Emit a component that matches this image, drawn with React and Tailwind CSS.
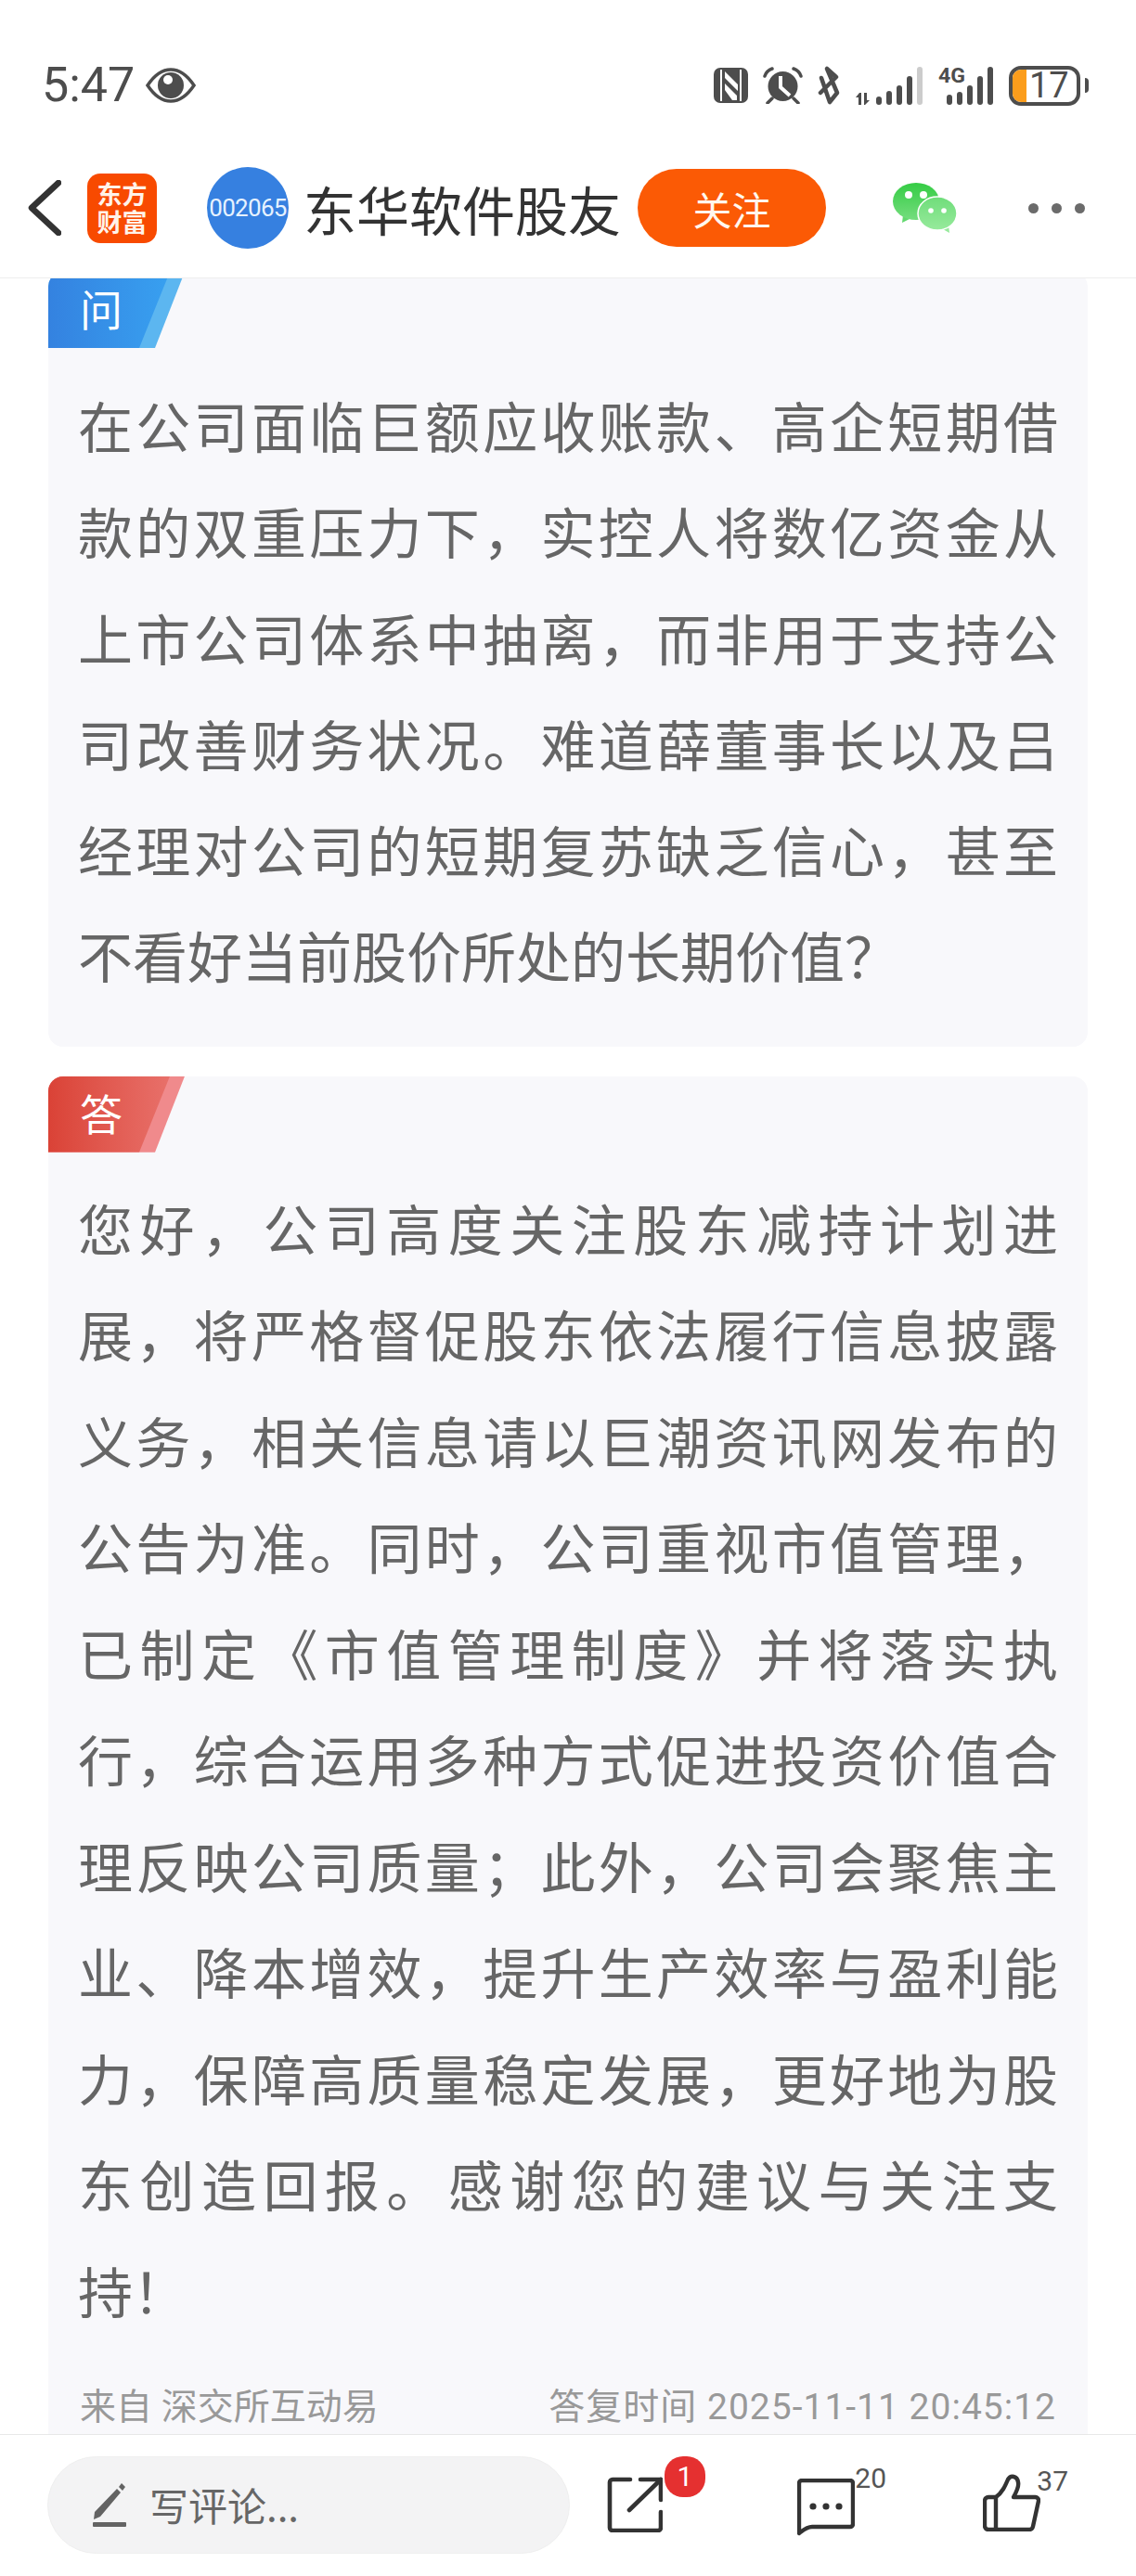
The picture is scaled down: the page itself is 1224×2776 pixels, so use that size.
import React from 'react'

const question =
  '在公司面临巨额应收账款、高企短期借款的双重压力下，实控人将数亿资金从上市公司体系中抽离，而非用于支持公司改善财务状况。难道薛董事长以及吕经理对公司的短期复苏缺乏信心，甚至不看好当前股价所处的长期价值？'

const answer =
  '您好，公司高度关注股东减持计划进展，将严格督促股东依法履行信息披露义务，相关信息请以巨潮资讯网发布的公告为准。同时，公司重视市值管理，已制定《市值管理制度》并将落实执行，综合运用多种方式促进投资价值合理反映公司质量；此外，公司会聚焦主业、降本增效，提升生产效率与盈利能力，保障高质量稳定发展，更好地为股东创造回报。感谢您的建议与关注支持！'

const EyeIcon = () => (
  <svg width="54" height="38" viewBox="0 0 54 38" fill="none">
    <path d="M2 19 C10 7 18 2 27 2 C36 2 44 7 52 19 C44 31 36 36 27 36 C18 36 10 31 2 19 Z" stroke="#4d4d4d" strokeWidth="3.5" />
    <circle cx="27" cy="19" r="14" fill="#4d4d4d" />
    <circle cx="24" cy="13" r="5" fill="#fff" />
  </svg>
)

const NfcIcon = () => (
  <svg width="37" height="38" viewBox="0 0 37 38">
    <rect width="37" height="38" rx="7" fill="#4d4d4d" />
    <path d="M8 2 V36 M29 2 V36" stroke="#fff" strokeWidth="2" />
    <path d="M12 4 L26 18 V25 L12 11 Z M12 17 L25 30 V35 H20 L12 24 Z" fill="#fff" />
  </svg>
)

const AlarmIcon = () => (
  <svg width="43" height="40" viewBox="0 0 43 40" fill="none">
    <circle cx="21.5" cy="21" r="16" fill="#4d4d4d" />
    <path d="M19 10 V22 L29 31" stroke="#fff" strokeWidth="4" />
    <path d="M2 10 Q4 4 10 2 M41 10 Q39 4 33 2 M10 34 L5 39 M33 34 L38 39" stroke="#4d4d4d" strokeWidth="3.5" strokeLinecap="round" />
  </svg>
)

const BluetoothIcon = () => (
  <svg width="25" height="42" viewBox="0 0 25 42" fill="none">
    <path d="M3 29 L20 12 L10 3 L21 29 L13 39 L4 13" stroke="#4d4d4d" strokeWidth="4.5" strokeLinejoin="round" strokeLinecap="round" />
  </svg>
)

const DataSignal = () => (
  <svg width="73" height="42" viewBox="0 0 73 42">
    <path d="M0 34 L4 29 L6 29 V42 H3 V34 Z M9 29 H12 V37 L15 37 L10 42 L9 42 Z" fill="#4d4d4d" />
    <rect x="22" y="33" width="6" height="9" rx="3" fill="#4d4d4d" />
    <rect x="33" y="27" width="6" height="15" rx="3" fill="#4d4d4d" />
    <rect x="44" y="21" width="6" height="21" rx="3" fill="#4d4d4d" />
    <rect x="55" y="11" width="6" height="31" rx="3" fill="#4d4d4d" />
    <rect x="66" y="1" width="6" height="41" rx="3" fill="#cccccc" />
  </svg>
)

const Cell4G = () => (
  <svg width="60" height="42" viewBox="0 0 60 42">
    <text x="0" y="18" fontFamily="Roboto" fontWeight="700" fontSize="22" fill="#4d4d4d" textLength="29" lengthAdjust="spacingAndGlyphs">4G</text>
    <rect x="9" y="31" width="6" height="11" rx="3" fill="#4d4d4d" />
    <rect x="20" y="28" width="6" height="14" rx="3" fill="#4d4d4d" />
    <rect x="31" y="21" width="6" height="21" rx="3" fill="#4d4d4d" />
    <rect x="42" y="11" width="6" height="31" rx="3" fill="#4d4d4d" />
    <rect x="53" y="1" width="6" height="41" rx="3" fill="#4d4d4d" />
  </svg>
)

const ShareIcon = () => (
  <svg width="60" height="60" viewBox="0 0 60 60" fill="none" stroke="#333" strokeWidth="4.6" strokeLinecap="round" strokeLinejoin="round">
    <path d="M25 3 H6 a3 3 0 0 0 -3 3 V55 a3 3 0 0 0 3 3 H55 a3 3 0 0 0 3 -3 V38" />
    <path d="M36 3 H58 V25" />
    <path d="M58 3 L24 36" />
  </svg>
)

const CommentIcon = () => (
  <svg width="62" height="62" viewBox="0 0 62 62" fill="none">
    <path d="M2 59 V5 a3 3 0 0 1 3 -3 H57 a3 3 0 0 1 3 3 V49 a3 3 0 0 1 -3 3 H16 C10 52 6 56 2 59 Z" stroke="#333" strokeWidth="4.4" strokeLinejoin="round" />
    <circle cx="17" cy="30" r="3.6" fill="#333" />
    <circle cx="31" cy="30" r="3.6" fill="#333" />
    <circle cx="45" cy="30" r="3.6" fill="#333" />
  </svg>
)

const ThumbIcon = () => (
  <svg width="62" height="62" viewBox="0 0 62 62" fill="none" stroke="#333" strokeWidth="4.4" strokeLinejoin="round" strokeLinecap="round">
    <path d="M14 25 H6 a4 4 0 0 0 -4 4 V56 a4 4 0 0 0 4 4 H50 a4 4 0 0 0 4 -3.5 L60 29 a3.5 3.5 0 0 0 -3.5 -4 H33 C37 18 39 13 38 9 C37 2 30 1 27 6 C24 13 21 20 14 25 Z" />
    <path d="M14 25 V60" />
  </svg>
)

const WechatIcon = () => (
  <svg width="70" height="54" viewBox="0 0 70 54">
    <defs>
      <linearGradient id="wxBig" x1="0" y1="0" x2="0" y2="1">
        <stop offset="0" stopColor="#35cc44" />
        <stop offset="1" stopColor="#74dd7e" />
      </linearGradient>
      <linearGradient id="wxSmall" x1="0" y1="0" x2="0" y2="1">
        <stop offset="0" stopColor="#6fdd7a" />
        <stop offset="1" stopColor="#97ea9c" />
      </linearGradient>
    </defs>
    <path d="M10 43 L11 35 L20 38 Z" fill="#62d86e" />
    <ellipse cx="25" cy="20" rx="25" ry="20" fill="url(#wxBig)" />
    <circle cx="17" cy="13" r="4" fill="#fff" />
    <circle cx="33" cy="13" r="4" fill="#fff" />
    <path d="M61 54 L60 46 L52 49 Z" fill="#97ea9c" />
    <ellipse cx="48" cy="33" rx="21" ry="18" fill="url(#wxSmall)" stroke="#fff" strokeWidth="1.5" />
    <circle cx="41" cy="30" r="2.8" fill="#fff" />
    <circle cx="55" cy="30" r="2.8" fill="#fff" />
  </svg>
)

const Badge = ({ label, back, front }) => (
  <div className={`h-[82px] w-[147px] shrink-0 [clip-path:polygon(0_0,147px_0,115px_82px,0_82px)] ${back}`}>
    <div className={`flex h-full w-[131px] items-center pb-[6px] pl-[34px] text-[46px] leading-none text-white [clip-path:polygon(0_0,131px_0,98px_82px,0_82px)] ${front}`}>
      {label}
    </div>
  </div>
)

const StatusBar = () => (
  <div className="flex h-[170px] shrink-0 items-start justify-between pt-[68px] pl-[45px] pr-[51px]">
    <div className="flex h-[48px] items-center gap-[12px]">
      <span className="font-['Roboto'] text-[52px] leading-none text-[#4d4d4d]">5:47</span>
      <EyeIcon />
    </div>
    <div className="flex h-[48px] items-center gap-4">
      <NfcIcon />
      <AlarmIcon />
      <BluetoothIcon />
      <DataSignal />
      <Cell4G />
      <div className="flex items-center gap-[5px]">
        <div className="relative flex h-[43px] w-[77px] items-center overflow-hidden rounded-[13px] border-[4px] border-[#4d4d4d]">
          <div className="h-full w-[15px] bg-[#fb9d1c]" />
          <span className="ml-[3px] font-['Roboto'] text-[38px] leading-none text-[#4d4d4d]">17</span>
        </div>
        <div className="h-[16px] w-[4px] rounded-r-full bg-[#4d4d4d]" />
      </div>
    </div>
  </div>
)

const Header = () => (
  <div className="flex h-[130px] shrink-0 items-center border-b border-[#eeeeee] pb-[21px]">
    <svg className="ml-[30px]" width="36" height="60" viewBox="0 0 36 60" fill="none">
      <path d="M33 3 L4 30 L33 57" stroke="#333" strokeWidth="6.5" strokeLinecap="round" strokeLinejoin="round" />
    </svg>
    <div className="ml-[28px] flex h-[75px] w-[75px] flex-col items-center justify-center rounded-[14px] bg-[#f84a00] text-[27px] font-bold leading-[30px] text-[#fff3ea]">
      <span>东方</span>
      <span>财富</span>
    </div>
    <div className="ml-[54px] flex h-[88px] w-[88px] items-center justify-center rounded-full bg-[#3680e0] font-['Roboto'] text-[26px] tracking-[-0.7px] text-[#e6f2ff]">
      002065
    </div>
    <h1 className="ml-[16px] text-[57px] font-normal leading-none text-[#333333]">东华软件股友</h1>
    <button className="ml-[18px] flex h-[84px] w-[203px] items-center justify-center rounded-full bg-[#fb5a05] text-[42px] text-[#fff7ee]">
      关注
    </button>
    <div className="ml-[72px]">
      <WechatIcon />
    </div>
    <div className="ml-[76px] flex items-center gap-[14px]">
      <span className="h-[11px] w-[11px] rounded-full bg-[#6b6b6b]" />
      <span className="h-[11px] w-[11px] rounded-full bg-[#6b6b6b]" />
      <span className="h-[11px] w-[11px] rounded-full bg-[#6b6b6b]" />
    </div>
  </div>
)

const Footer = () => (
  <div className="flex h-[153px] shrink-0 items-center border-t border-[#e8e8e8] bg-white pb-[2px] pl-[51px]">
    <div className="flex h-[105px] w-[563px] items-center rounded-full border border-[#efefef] bg-[#f3f3f4] pl-[48px]">
      <svg width="36" height="50" viewBox="0 0 36 50">
        <path d="M31 2 L35 6 L32 10 L28 6 Z M26 8 L30 12 L8 38 L1 41 L2 33 Z" fill="#636363" />
        <rect y="44" width="36" height="5" rx="1" fill="#636363" />
      </svg>
      <span className="ml-[25px] text-[42px] leading-none text-[#666666]">写评论...</span>
    </div>
    <div className="relative ml-[40px]">
      <ShareIcon />
      <span className="absolute -right-[46px] -top-[22px] flex h-[44px] w-[44px] items-center justify-center rounded-[20px] bg-[#e53030] font-['Roboto'] text-[30px] leading-none text-white">
        1
      </span>
    </div>
    <div className="relative ml-[145px] mt-[6px]">
      <CommentIcon />
      <span className="absolute -right-[34px] -top-[15px] font-['Roboto'] text-[30px] leading-[30px] text-[#555555]">20</span>
    </div>
    <div className="relative ml-[138px] -mt-[4px]">
      <ThumbIcon />
      <span className="absolute -right-[30px] -top-[7px] font-['Roboto'] text-[30px] leading-[30px] text-[#555555]">37</span>
    </div>
  </div>
)

export default function App() {
  return (
    <div className="flex h-[2776px] w-[1224px] flex-col overflow-hidden bg-white font-['Noto_Sans_CJK_SC',sans-serif]">
      <StatusBar />
      <Header />
      <main className="min-h-0 flex-1 overflow-hidden px-[52px]">
        {/* the list is scrolled a little, so the first card starts under the header */}
        <section className="-mt-[7px] overflow-hidden rounded-[16px] bg-[#f8f8fb] pb-[41px]">
          <Badge label="问" back="bg-[#5cb6f0]" front="bg-gradient-to-r from-[#3482e0] to-[#38a0f0]" />
          <p className="mt-[26px] px-[32px] text-justify text-[59px] leading-[114.3px] text-[#666666]">{question}</p>
        </section>
        <section className="mt-[32px] overflow-hidden rounded-[16px] bg-[#f8f8fb]">
          <Badge label="答" back="bg-[#f08a8c]" front="bg-gradient-to-r from-[#da4236] to-[#e8706a]" />
          <p className="mt-[24px] px-[32px] text-justify text-[59px] leading-[114.5px] text-[#666666]">{answer}</p>
          <div className="mt-[44px] flex items-center justify-between px-[34px] pb-[20px] font-['Roboto','Noto_Sans_CJK_SC',sans-serif] text-[39px] leading-[50px] text-[#999999]">
            <span>来自 深交所互动易</span>
            <span className="tracking-[1px]">答复时间 2025-11-11 20:45:12</span>
          </div>
        </section>
      </main>
      <Footer />
    </div>
  )
}
